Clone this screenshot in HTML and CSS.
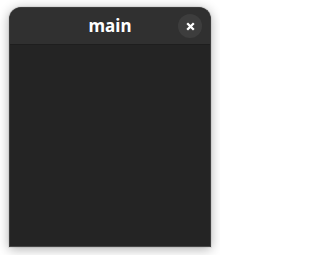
FILE: index.html
```html
<!DOCTYPE html>
<html>
<head>
<meta charset="utf-8">
<link rel="stylesheet" href="styles.css">
</head>
<body>
<div class="window">
  <header class="titlebar">
    <span class="spacer"></span>
    <span class="title">main</span>
    <button class="close" aria-label="Close">
      <svg width="9" height="9" viewBox="0 0 9 9"><path d="M1.2 1.2 L7.8 7.8 M7.8 1.2 L1.2 7.8" stroke="#ffffff" stroke-width="2.3" stroke-linecap="butt" fill="none"/></svg>
    </button>
  </header>
  <main class="content"></main>
</div>
</body>
</html>
```
FILE: styles.css
```css
html, body {
  margin: 0;
  padding: 0;
}
html {
  background: #ffffff;
}
body {
  background: #ffffff;
  width: 220px;
  height: 255px;
  box-sizing: border-box;
  padding: 7px 9px 10px 9px;
  font-family: "Noto Sans", "Open Sans", sans-serif;
}
.window {
  height: 238px;
  display: flex;
  flex-direction: column;
  background: #242424;
  border: 1px solid #3c3c3c;
  border-bottom-color: #474747;
  border-radius: 12px 12px 0 0;
  box-shadow: 0 2px 12px rgba(0, 0, 0, 0.32), 0 0 0 1px rgba(0, 0, 0, 0.06);
  overflow: hidden;
}
.titlebar {
  height: 36px;
  flex: none;
  display: grid;
  grid-template-columns: 1fr auto 1fr;
  align-items: center;
  background: #303030;
  border-bottom: 1px solid #1e1e1e;
}
.title {
  color: #ffffff;
  font-weight: 700;
  font-size: 17px;
  line-height: 22px;
}
.close {
  justify-self: end;
  margin-right: 8px;
  width: 24px;
  height: 24px;
  border-radius: 50%;
  border: none;
  padding: 0;
  background: #3d3d3d;
  display: flex;
  align-items: center;
  justify-content: center;
}
.content {
  flex: 1;
  background: #242424;
}
```
